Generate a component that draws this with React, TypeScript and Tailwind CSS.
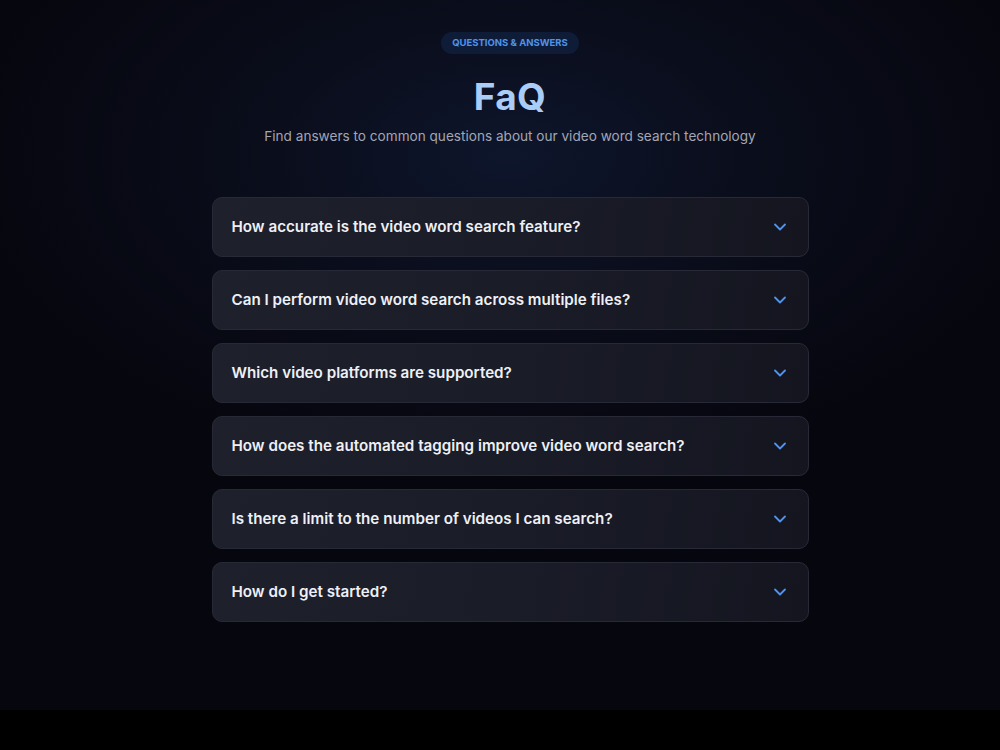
import React from "react";

const questions = [
  "How accurate is the video word search feature?",
  "Can I perform video word search across multiple files?",
  "Which video platforms are supported?",
  "How does the automated tagging improve video word search?",
  "Is there a limit to the number of videos I can search?",
  "How do I get started?",
];

function Chevron() {
  return (
    <svg width="20" height="20" viewBox="0 0 24 24" fill="none" stroke="#4f93ea" strokeWidth="2.2" strokeLinecap="round" strokeLinejoin="round">
      <path d="M6 9l6 6 6-6" />
    </svg>
  );
}

export default function App() {
  return (
    <div className="w-[1000px] h-[750px] bg-black" style={{ fontFamily: "Inter, 'Noto Sans', sans-serif" }}>
      <section className="h-[710px] bg-[#06060e] bg-[radial-gradient(ellipse_55%_45%_at_51%_22%,#0e162c_0%,#0a0d1b_45%,#06060e_100%)] pl-[20px] pt-[32px] flex flex-col items-center">
        <div className="h-[22px] px-[11px] rounded-full bg-[#0f1c38] flex items-center text-[9.5px] font-bold text-[#4f93ea]">
          QUESTIONS &amp; ANSWERS
        </div>
        <h1 className="mt-[21px] text-[37px] leading-[44px] font-bold text-[#a9cdf7] tracking-[0.01em]">FaQ</h1>
        <p className="mt-[7px] text-[13.6px] leading-[20px] text-[#a3a6b4]">
          Find answers to common questions about our video word search technology
        </p>
        <div className="mt-[51px] w-[597px] flex flex-col gap-[13px]">
          {questions.map((q) => (
            <div
              key={q}
              className="h-[60px] rounded-[10px] border border-[#272a36] bg-[linear-gradient(100deg,#1e202c_0%,#1a1c28_50%,#14151f_100%)] flex items-center justify-between pl-[19px] pr-[18px]"
            >
              <span className="text-[15.2px] font-semibold text-[#eef0f5]">{q}</span>
              <Chevron />
            </div>
          ))}
        </div>
      </section>
    </div>
  );
}
